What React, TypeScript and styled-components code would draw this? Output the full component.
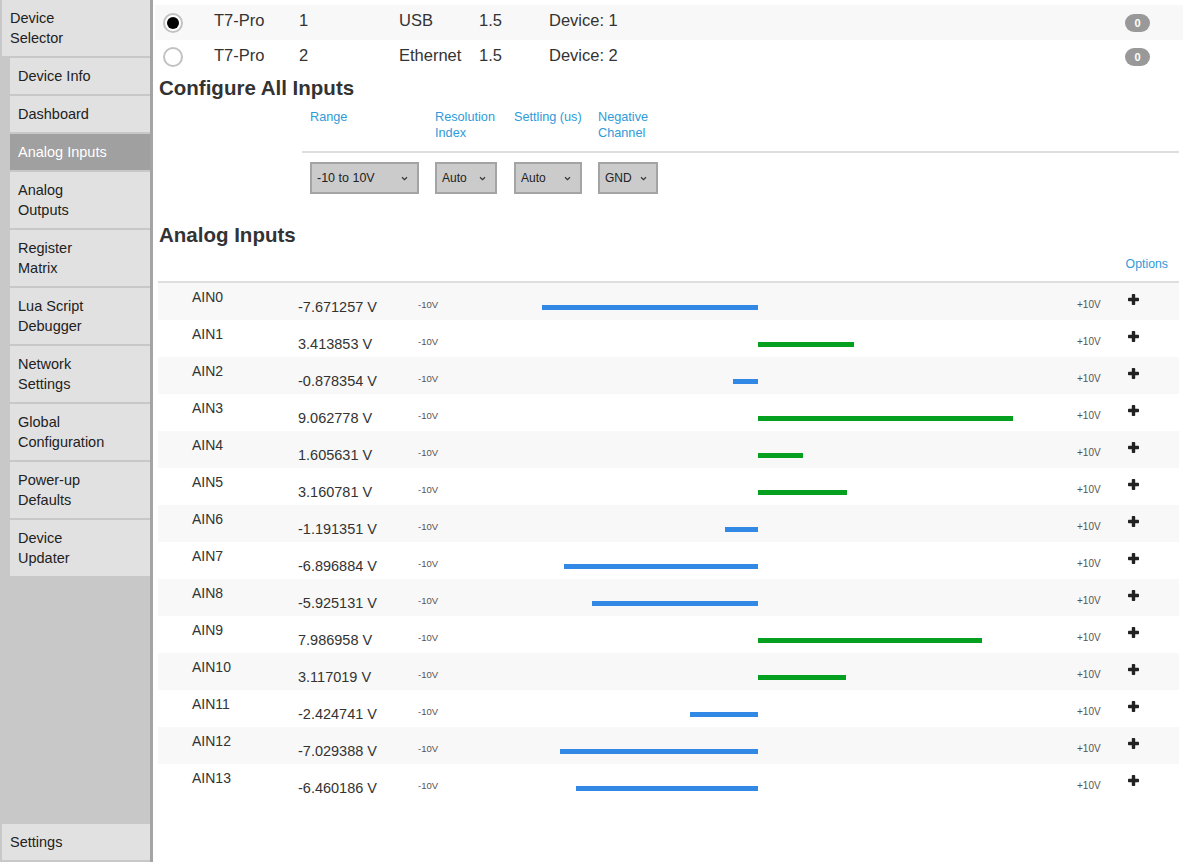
import React from "react";
import styled, { createGlobalStyle } from "styled-components";

const GlobalStyle = createGlobalStyle`
  html, body { margin: 0; padding: 0; height: 100%; overflow: hidden; background: #fff; }
  body { font-family: "Liberation Sans", Arial, sans-serif; color: #333; }
  #root { height: 100%; }
`;

const Page = styled.div`
  display: flex;
  height: 862px;
  width: 1185px;
`;

const Sidebar = styled.nav`
  width: 153px;
  flex: none;
  display: flex;
  flex-direction: column;
  gap: 2px;
  padding-left: 2px;
  box-sizing: border-box;
  padding-bottom: 2px;
  background: #c8c8c8;
  border-right: 3px solid #a4a4a4;
`;

const NavItem = styled.div<{ $sub?: boolean; $active?: boolean; $bottom?: boolean }>`
  margin-left: ${(p) => (p.$sub ? "8px" : "0")};
  margin-top: ${(p) => (p.$bottom ? "auto" : "0")};
  padding: 8px 8px;
  font-size: 14.5px;
  line-height: 20px;
  color: ${(p) => (p.$active ? "#fff" : "#222")};
  background: ${(p) => (p.$active ? "#a0a0a0" : "#e1e1e1")};
`;

const Main = styled.main`
  flex: 1;
  padding: 5px 2px 0 2px;
  display: flex;
  flex-direction: column;
`;

const DeviceRow = styled.div<{ $odd?: boolean; $h: number }>`
  display: grid;
  grid-template-columns: 51px 85px 100px 80px 70px 1fr 25px;
  align-items: center;
  height: ${(p) => p.$h}px;
  padding: 0 33px 0 8px;
  background: ${(p) => (p.$odd ? "#f8f8f8" : "#fff")};
  font-size: 16.5px;
  color: #333;
`;

const Cell = styled.span`
  margin-bottom: 4px;
`;

const Radio = styled.span<{ $checked?: boolean }>`
  width: 20px;
  height: 20px;
  box-sizing: border-box;
  border-radius: 50%;
  border: 2px solid #c2c2c2;
  background: #fff;
  display: flex;
  align-items: center;
  justify-content: center;
  &::after {
    content: "";
    display: ${(p) => (p.$checked ? "block" : "none")};
    width: 12px;
    height: 12px;
    border-radius: 50%;
    background: #000;
  }
`;

const Badge = styled.span`
  width: 25px;
  height: 18px;
  border-radius: 9px;
  background: #999;
  color: #fff;
  font-size: 11px;
  font-weight: bold;
  display: flex;
  align-items: center;
  justify-content: center;
`;

const Heading = styled.h2<{ $top: number }>`
  margin: ${(p) => p.$top}px 0 0 4px;
  font-size: 20.5px;
  line-height: 22px;
  font-weight: bold;
  color: #333;
`;

const ConfigTable = styled.div`
  margin: 10px 4px 0 147px;
  display: grid;
  grid-template-columns: 125px 79px 84px 84px 1fr;
`;

const ConfigHead = styled.div`
  padding: 0 8px 10px 8px;
  font-size: 12.7px;
  line-height: 16px;
  color: #2f9bd8;
  border-bottom: 2px solid #dedede;
  white-space: nowrap;
`;

const ConfigCell = styled.div`
  padding: 9px 8px 0 8px;
`;

const SelectBox = styled.div<{ $w: number; $fs?: number }>`
  width: ${(p) => p.$w}px;
  height: 32px;
  box-sizing: border-box;
  border: 2px solid #a4a4a4;
  background: #cbcbcb;
  display: flex;
  align-items: center;
  justify-content: space-between;
  padding: 0 9px 0 5px;
  font-size: ${(p) => p.$fs ?? 12}px;
  color: #222;
`;

const Chevron = () => (
  <svg width="7" height="5" viewBox="0 0 7 5">
    <path d="M1 1.2 L3.5 3.6 L6 1.2" fill="none" stroke="#333" strokeWidth="1.2" />
  </svg>
);

const OptionsHead = styled.div`
  margin: 10px 4px 0 3px;
  padding: 0 11px 9px 0;
  text-align: right;
  font-size: 12.3px;
  line-height: 16px;
  color: #2f9bd8;
  border-bottom: 2px solid #dedede;
`;

const Rows = styled.div`
  margin: 0 4px 0 3px;
`;

const AinRow = styled.div<{ $odd?: boolean }>`
  display: grid;
  grid-template-columns: 106px 120px 59px 562px 38px 51px 12px;
  align-items: start;
  height: 37px;
  padding-left: 34px;
  background: ${(p) => (p.$odd ? "#f8f8f8" : "#fff")};
`;

const AinName = styled.div`
  margin-top: 6px;
  font-size: 14px;
  line-height: 17px;
  color: #333;
`;

const AinValue = styled.div`
  margin-top: 16px;
  font-size: 14.5px;
  line-height: 17px;
  color: #333;
`;

const RangeLabel = styled.div<{ $fs?: number }>`
  margin-top: 16px;
  font-size: ${(p) => p.$fs ?? 9.5}px;
  line-height: 12px;
  color: #555;
`;

const Track = styled.div`
  margin-top: 22px;
  height: 5px;
  display: grid;
  grid-template-columns: 281px 281px;
`;

const Half = styled.div<{ $neg?: boolean }>`
  display: flex;
  justify-content: ${(p) => (p.$neg ? "flex-end" : "flex-start")};
`;

const Bar = styled.div<{ $neg?: boolean }>`
  height: 5px;
  background: ${(p) => (p.$neg ? "#3189e5" : "#06a021")};
`;

const PlusIcon = styled.svg`
  margin-top: 11px;
  display: block;
`;

const Plus = () => (
  <PlusIcon width="11" height="11" viewBox="0 0 11 11">
    <rect x="3.8" y="0" width="3.4" height="11" rx="0.8" fill="#222" />
    <rect x="0" y="3.8" width="11" height="3.4" rx="0.8" fill="#222" />
  </PlusIcon>
);

const ains = [
  -7.671257, 3.413853, -0.878354, 9.062778, 1.605631, 3.160781, -1.191351,
  -6.896884, -5.925131, 7.986958, 3.117019, -2.424741, -7.029388, -6.460186,
];

const navItems: { label: React.ReactNode; active?: boolean }[] = [
  { label: "Device Info" },
  { label: "Dashboard" },
  { label: "Analog Inputs", active: true },
  { label: <>Analog<br />Outputs</> },
  { label: <>Register<br />Matrix</> },
  { label: <>Lua Script<br />Debugger</> },
  { label: <>Network<br />Settings</> },
  { label: <>Global<br />Configuration</> },
  { label: <>Power-up<br />Defaults</> },
  { label: <>Device<br />Updater</> },
];

const devices = [
  { id: "1", conn: "USB", checked: true, h: 35 },
  { id: "2", conn: "Ethernet", checked: false, h: 34 },
];

export default function App() {
  return (
    <>
      <GlobalStyle />
      <Page>
        <Sidebar>
          <NavItem>Device<br />Selector</NavItem>
          {navItems.map((n, i) => (
            <NavItem key={i} $sub $active={n.active}>{n.label}</NavItem>
          ))}
          <NavItem $bottom>Settings</NavItem>
        </Sidebar>
        <Main>
          {devices.map((d, i) => (
            <DeviceRow key={d.id} $odd={i === 0} $h={d.h}>
              <Radio $checked={d.checked} />
              <Cell>T7-Pro</Cell>
              <Cell>{d.id}</Cell>
              <Cell>{d.conn}</Cell>
              <Cell>1.5</Cell>
              <Cell>Device: {d.id}</Cell>
              <Badge>0</Badge>
            </DeviceRow>
          ))}
          <Heading $top={3}>Configure All Inputs</Heading>
          <ConfigTable>
            <ConfigHead>Range</ConfigHead>
            <ConfigHead>Resolution<br />Index</ConfigHead>
            <ConfigHead>Settling (us)</ConfigHead>
            <ConfigHead>Negative<br />Channel</ConfigHead>
            <ConfigHead />
            <ConfigCell><SelectBox $w={109} $fs={12.5}>-10 to 10V<Chevron /></SelectBox></ConfigCell>
            <ConfigCell><SelectBox $w={62}>Auto<Chevron /></SelectBox></ConfigCell>
            <ConfigCell><SelectBox $w={68}>Auto<Chevron /></SelectBox></ConfigCell>
            <ConfigCell><SelectBox $w={60}>GND<Chevron /></SelectBox></ConfigCell>
            <ConfigCell />
          </ConfigTable>
          <Heading $top={30}>Analog Inputs</Heading>
          <OptionsHead>Options</OptionsHead>
          <Rows>
            {ains.map((v, i) => {
              const w = (Math.abs(v) / 10) * 281;
              return (
                <AinRow key={i} $odd={i % 2 === 0}>
                  <AinName>AIN{i}</AinName>
                  <AinValue>{v.toFixed(6)} V</AinValue>
                  <RangeLabel>-10V</RangeLabel>
                  <Track>
                    <Half $neg>{v < 0 && <Bar $neg style={{ width: `${w}px` }} />}</Half>
                    <Half>{v >= 0 && <Bar style={{ width: `${w}px` }} />}</Half>
                  </Track>
                  <span />
                  <RangeLabel $fs={10}>+10V</RangeLabel>
                  <Plus />
                </AinRow>
              );
            })}
          </Rows>
        </Main>
      </Page>
    </>
  );
}
